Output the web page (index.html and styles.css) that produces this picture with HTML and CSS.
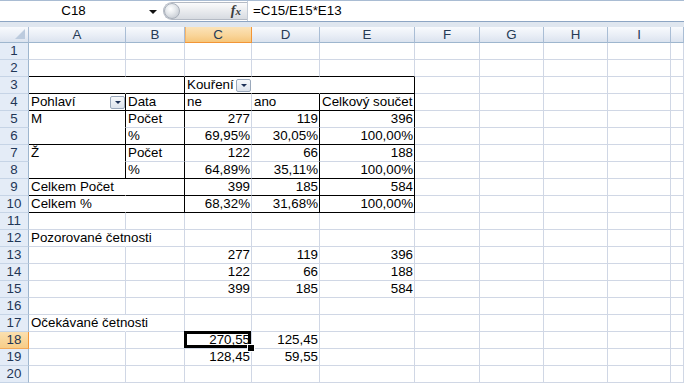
FILE: index.html
```html
<!DOCTYPE html>
<html lang="cs">
<head>
<meta charset="utf-8">
<title>Kontingenční tabulka</title>
<link rel="stylesheet" href="styles.css">
</head>
<body>
<div class="fbar">
  <div class="namebox"><span class="name">C18</span><span class="nb-arrow"></span></div>
  <div class="pill"><span class="knob"></span><span class="fx">f<span class="fx-x">x</span></span></div>
  <div class="formula">=C15/E15*E13</div>
</div>
<div class="band"></div>
<div class="sheet">
  <div class="row hdr">
    <div class="corner"></div><div class="ch">A</div><div class="ch">B</div><div class="ch csel">C</div><div class="ch">D</div><div class="ch">E</div><div class="ch">F</div><div class="ch">G</div><div class="ch">H</div><div class="ch">I</div><div class="ch"></div>
  </div>
  <div class="row"><div class="rh">1</div><div class="c"></div><div class="c"></div><div class="c"></div><div class="c"></div><div class="c"></div><div class="c"></div><div class="c"></div><div class="c"></div><div class="c"></div><div class="c"></div></div>
  <div class="row"><div class="rh">2</div><div class="c kb"></div><div class="c kb"></div><div class="c kb"></div><div class="c kb"></div><div class="c kb"></div><div class="c"></div><div class="c"></div><div class="c"></div><div class="c"></div><div class="c"></div></div>
  <div class="row"><div class="rh">3</div><div class="c wr kb"></div><div class="c kr kb"></div><div class="c wr kb fl"><span>Kouření</span><span class="dd"></span></div><div class="c wr kb"></div><div class="c kr kb"></div><div class="c"></div><div class="c"></div><div class="c"></div><div class="c"></div><div class="c"></div></div>
  <div class="row"><div class="rh">4</div><div class="c kr kb fl"><span>Pohlaví</span><span class="dd"></span></div><div class="c kr kb">Data</div><div class="c kb">ne</div><div class="c kr kb">ano</div><div class="c kr kb">Celkový součet</div><div class="c"></div><div class="c"></div><div class="c"></div><div class="c"></div><div class="c"></div></div>
  <div class="row"><div class="rh">5</div><div class="c kr wb">M</div><div class="c kr">Počet</div><div class="c n">277</div><div class="c n kr">119</div><div class="c n kr">396</div><div class="c"></div><div class="c"></div><div class="c"></div><div class="c"></div><div class="c"></div></div>
  <div class="row"><div class="rh">6</div><div class="c kr kb"></div><div class="c kr kb">%</div><div class="c n kb">69,95%</div><div class="c n kr kb">30,05%</div><div class="c n kr kb">100,00%</div><div class="c"></div><div class="c"></div><div class="c"></div><div class="c"></div><div class="c"></div></div>
  <div class="row"><div class="rh">7</div><div class="c kr wb">Ž</div><div class="c kr">Počet</div><div class="c n">122</div><div class="c n kr">66</div><div class="c n kr">188</div><div class="c"></div><div class="c"></div><div class="c"></div><div class="c"></div><div class="c"></div></div>
  <div class="row"><div class="rh">8</div><div class="c kr kb"></div><div class="c kr kb">%</div><div class="c n kb">64,89%</div><div class="c n kr kb">35,11%</div><div class="c n kr kb">100,00%</div><div class="c"></div><div class="c"></div><div class="c"></div><div class="c"></div><div class="c"></div></div>
  <div class="row"><div class="rh">9</div><div class="c wr kb ov">Celkem Počet</div><div class="c kr kb"></div><div class="c n kb">399</div><div class="c n kr kb">185</div><div class="c n kr kb">584</div><div class="c"></div><div class="c"></div><div class="c"></div><div class="c"></div><div class="c"></div></div>
  <div class="row"><div class="rh">10</div><div class="c wr kb ov">Celkem %</div><div class="c kr kb"></div><div class="c n kb">68,32%</div><div class="c n kr kb">31,68%</div><div class="c n kr kb">100,00%</div><div class="c"></div><div class="c"></div><div class="c"></div><div class="c"></div><div class="c"></div></div>
  <div class="row"><div class="rh">11</div><div class="c"></div><div class="c"></div><div class="c"></div><div class="c"></div><div class="c"></div><div class="c"></div><div class="c"></div><div class="c"></div><div class="c"></div><div class="c"></div></div>
  <div class="row"><div class="rh">12</div><div class="c wr ov">Pozorované četnosti</div><div class="c"></div><div class="c"></div><div class="c"></div><div class="c"></div><div class="c"></div><div class="c"></div><div class="c"></div><div class="c"></div><div class="c"></div></div>
  <div class="row"><div class="rh">13</div><div class="c"></div><div class="c"></div><div class="c n">277</div><div class="c n">119</div><div class="c n">396</div><div class="c"></div><div class="c"></div><div class="c"></div><div class="c"></div><div class="c"></div></div>
  <div class="row"><div class="rh">14</div><div class="c"></div><div class="c"></div><div class="c n">122</div><div class="c n">66</div><div class="c n">188</div><div class="c"></div><div class="c"></div><div class="c"></div><div class="c"></div><div class="c"></div></div>
  <div class="row"><div class="rh">15</div><div class="c"></div><div class="c"></div><div class="c n">399</div><div class="c n">185</div><div class="c n">584</div><div class="c"></div><div class="c"></div><div class="c"></div><div class="c"></div><div class="c"></div></div>
  <div class="row"><div class="rh">16</div><div class="c"></div><div class="c"></div><div class="c"></div><div class="c"></div><div class="c"></div><div class="c"></div><div class="c"></div><div class="c"></div><div class="c"></div><div class="c"></div></div>
  <div class="row"><div class="rh">17</div><div class="c wr ov">Očekávané četnosti</div><div class="c"></div><div class="c"></div><div class="c"></div><div class="c"></div><div class="c"></div><div class="c"></div><div class="c"></div><div class="c"></div><div class="c"></div></div>
  <div class="row"><div class="rh rsel">18</div><div class="c"></div><div class="c"></div><div class="c n sel">270,55</div><div class="c n">125,45</div><div class="c"></div><div class="c"></div><div class="c"></div><div class="c"></div><div class="c"></div><div class="c"></div></div>
  <div class="row"><div class="rh">19</div><div class="c"></div><div class="c"></div><div class="c n">128,45</div><div class="c n">59,55</div><div class="c"></div><div class="c"></div><div class="c"></div><div class="c"></div><div class="c"></div><div class="c"></div></div>
  <div class="row"><div class="rh">20</div><div class="c"></div><div class="c"></div><div class="c"></div><div class="c"></div><div class="c"></div><div class="c"></div><div class="c"></div><div class="c"></div><div class="c"></div><div class="c"></div></div>
</div>
</body>
</html>
```
FILE: styles.css
```css
* { box-sizing: border-box; margin: 0; padding: 0; }
html, body { width: 684px; height: 383px; overflow: hidden; background: #fff; }
body { font-family: "Liberation Sans", Arial, sans-serif; font-size: 13.33px; color: #000; }

/* formula bar */
.fbar {
  height: 22px;
  display: flex;
  border-top: 1px solid #a9bcd3;
  border-bottom: 1px solid #8da5c3;
  background: #fff;
}
.namebox { width: 163px; display: flex; align-items: center; }
.name { width: 147px; text-align: center; line-height: 20px; }
.nb-arrow {
  width: 0; height: 0;
  border-left: 4px solid transparent;
  border-right: 4px solid transparent;
  border-top: 4px solid #111;
  margin-left: 2px;
  margin-top: 2px;
}
.pill {
  width: 84px;
  height: 18px;
  margin-top: 1px;
  display: flex;
  align-items: center;
  justify-content: space-between;
  border: 1px solid #b4bac4;
  border-right: none;
  border-radius: 9px 0 0 9px;
  background: linear-gradient(#fbfbfc, #e9ebee 50%, #d7dbe1);
}
.knob {
  width: 16px; height: 16px;
  border-radius: 50%;
  border: 1px solid #a9b0ba;
  background: radial-gradient(circle at 40% 35%, #ffffff 0, #e9ecef 35%, #b9bfc8 100%);
}
.fx {
  font-family: "Liberation Serif", serif;
  font-style: italic;
  font-weight: bold;
  font-size: 14px;
  color: #3c3c3c;
  padding-right: 6px;
  line-height: 16px;
}
.fx-x { font-size: 11px; }
.formula {
  flex: 1;
  border-left: 1px solid #c3cbd6;
  padding-left: 5px;
  line-height: 20px;
}
.band { height: 5px; background: #dfe6ef; }

/* sheet grid */
.row {
  display: grid;
  grid-template-columns: 29px 97px 59px 67px 68px 95px 65px 64px 64px 63px 13px;
  height: 17px;
}
.row.hdr { height: 16px; }

.corner, .ch {
  background: linear-gradient(#f8fafd, #e9eef6 55%, #dbe3ef);
  border-right: 1px solid #a9bdd5;
  border-bottom: 1px solid #9eb6ce;
  color: #253a55;
  text-align: center;
  line-height: 15px;
}
.corner { position: relative; }
.corner::after {
  content: "";
  position: absolute;
  right: 3px; bottom: 3px;
  width: 0; height: 0;
  border-left: 10px solid transparent;
  border-bottom: 10px solid #bccbde;
}
.ch.csel {
  background: linear-gradient(#fbe3b9, #f9d59a 55%, #f6c67b);
  border-right: 1px solid #f29536;
  border-bottom: 1px solid #f29536;
  box-shadow: inset 1px 0 0 #f5b56a;
}

.rh {
  background: #e4ecf7;
  border-right: 1px solid #9eb6ce;
  border-bottom: 1px solid #c6d4e6;
  color: #1f3656;
  text-align: center;
  line-height: 16px;
}
.rh.rsel {
  background: linear-gradient(#fbe0b0, #f7cd88);
  border-right: 1px solid #f29536;
  border-bottom: 1px solid #f2a95a;
}

.c {
  border-right: 1px solid #d0d7e5;
  border-bottom: 1px solid #d0d7e5;
  padding: 0 2px;
  line-height: 16px;
  white-space: nowrap;
  overflow: hidden;
}
.c.n { text-align: right; padding-right: 1px; }
.c.ov { overflow: visible; position: relative; z-index: 1; }
.c.kr { border-right-color: #000; }
.c.kb { border-bottom-color: #000; }
.c.wr { border-right-color: #fff; }
.c.wb { border-bottom-color: #fff; }
.c.fl { display: flex; justify-content: space-between; align-items: flex-start; padding-right: 0; }

.dd {
  width: 15px;
  height: 13px;
  margin-top: 2px;
  border: 1px solid #9aa8bb;
  border-radius: 2px;
  background: linear-gradient(#f7f9fb, #dde3ec);
  display: flex;
  align-items: center;
  justify-content: center;
}
.dd::before {
  content: "";
  width: 0; height: 0;
  border-left: 3px solid transparent;
  border-right: 3px solid transparent;
  border-top: 3px solid #1d3157;
}

.c.sel { position: relative; overflow: visible; }
.c.sel::before {
  content: "";
  position: absolute;
  left: -1px; top: -1px; right: 0; bottom: 0;
  border: 3px solid #000;
}
.c.sel::after {
  content: "";
  position: absolute;
  right: -4px; bottom: -4px;
  width: 6px; height: 6px;
  background: #000;
  border: 1px solid #fff;
  z-index: 2;
}
```
